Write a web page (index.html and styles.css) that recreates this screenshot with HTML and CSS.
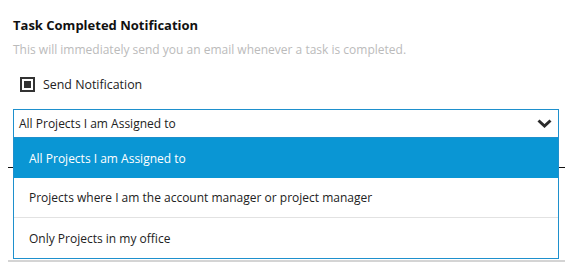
FILE: index.html
```html
<!DOCTYPE html>
<html lang="en">
<head>
  <meta charset="UTF-8" />
  <title>Task Completed Notification</title>
  <link rel="stylesheet" href="styles.css">
</head>
<body>
  <div class="painel">
    <h3 class="titulo">Task Completed Notification</h3>
    <p class="dica">This will immediately send you an email whenever a task is completed.</p>

    <label class="check">
      <span class="caixa"><span class="marca"></span></span>
      Send Notification
    </label>

    <div class="select-wrap">
      <div class="select">
        <span>All Projects I am Assigned to</span>
        <svg class="seta" width="15" height="9" viewBox="0 0 15 9">
          <path d="M1.5 1.5 L7.5 7 L13.5 1.5" fill="none" stroke="#2b2b2b" stroke-width="3"/>
        </svg>
      </div>
      <ul class="opcoes">
        <li class="ativo">All Projects I am Assigned to</li>
        <li>Projects where I am the account manager or project manager</li>
        <li>Only Projects in my office</li>
      </ul>
    </div>

    <div class="linha"></div>
    <div class="linha-cinza"></div>
  </div>
</body>
</html>
```

FILE: styles.css
```css
* {
  box-sizing: border-box;
  margin: 0;
  padding: 0;
}

body {
  font-family: "Open Sans", Arial, sans-serif;
  background-color: #fff;
  color: #222;
}

.painel {
  width: 557px;
  margin-left: 8px;
  padding-top: 16px;
}

.titulo {
  font-size: 13px;
  font-weight: bold;
  line-height: 18px;
  margin-left: 5px;
  color: #111;
}

.dica {
  font-size: 12px;
  line-height: 16px;
  color: #bbb;
  margin: 8px 0 0 5px;
}

/* CHECKBOX */
.check {
  display: flex;
  align-items: center;
  gap: 8px;
  font-size: 12.4px;
  margin: 18px 0 0 12px;
  height: 16px;
  color: #222;
}

.caixa {
  width: 15px;
  height: 15px;
  border: 2px solid #333;
  display: flex;
  align-items: center;
  justify-content: center;
}

.marca {
  width: 7px;
  height: 7px;
  background-color: #333;
}

/* SELECT */
.select-wrap {
  position: relative;
  margin: 17px 6px 0 5px;
}

.select {
  height: 29px;
  border: 1px solid #1e90cd;
  display: flex;
  align-items: center;
  justify-content: space-between;
  padding: 0 6px 0 5px;
  font-size: 12px;
  color: #222;
}

.seta {
  margin-top: -1px;
}

.opcoes {
  position: absolute;
  top: 29px;
  left: 0;
  right: 0;
  list-style: none;
  background-color: #fff;
  border: 1px solid #1e90cd;
  border-top: none;
  z-index: 2;
}

.opcoes li {
  height: 40px;
  display: flex;
  align-items: center;
  padding-left: 15px;
  font-size: 12px;
  color: #222;
  border-bottom: 1px solid #e2e2e2;
}

.opcoes li:last-child {
  border-bottom: none;
}

.opcoes li.ativo {
  background-color: #0a96d4;
  color: #fff;
  border-bottom: none;
}

.linha {
  margin-top: 29px;
  border-top: 1px solid #111;
}

.linha-cinza {
  margin-top: 92px;
  border-top: 2px solid #d4d4d4;
}
```
